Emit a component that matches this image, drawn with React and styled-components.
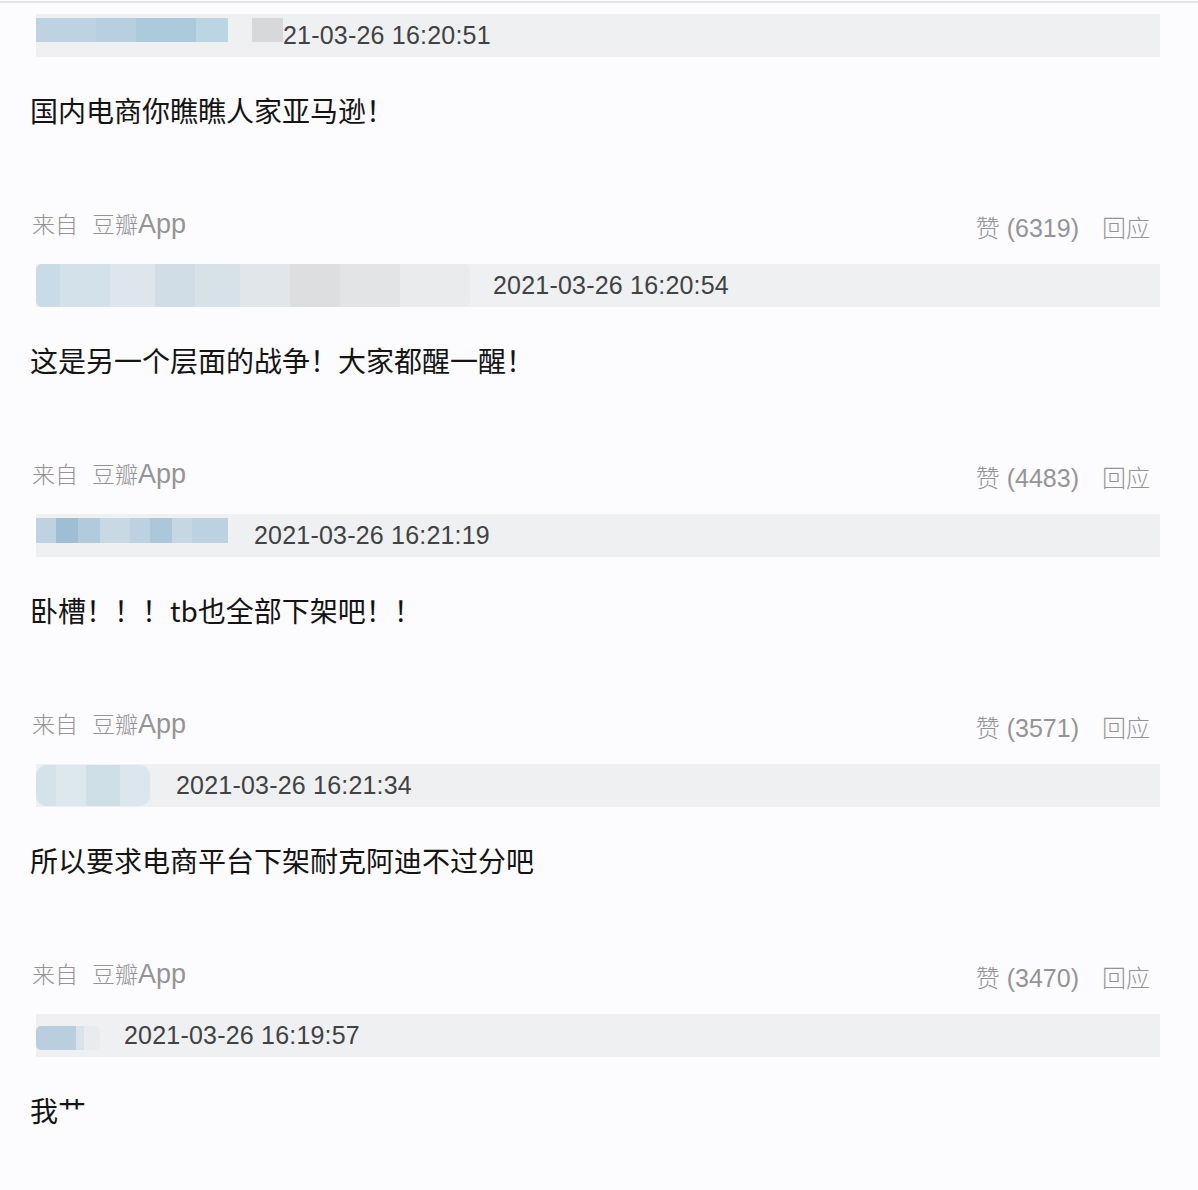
import React from "react";
import styled, { createGlobalStyle } from "styled-components";

const Global = createGlobalStyle`
  html, body { margin: 0; padding: 0; background: #fcfbfd; }
  body { font-family: "Liberation Sans", "Noto Sans CJK SC", sans-serif; }
`;

const Page = styled.div`
  width: 1198px;
  height: 1190px;
  background: #fcfbfd;
  overflow: hidden;
`;

const TopRule = styled.div`
  height: 2px;
  margin-top: 1px;
  background: #e4e4e6;
`;

const List = styled.div`
  display: flex;
  flex-direction: column;
  padding-top: 11px;
`;

const Entry = styled.div`
  display: flex;
  flex-direction: column;
  height: ${(p) => (p.$last ? "auto" : "250px")};
`;

const HeaderBar = styled.div`
  display: flex;
  align-items: center;
  height: 43px;
  margin-left: 36px;
  width: 1124px;
  background: #eff0f2;
`;

const Blur = styled.div`
  display: flex;
  align-self: ${(p) => (p.$full ? "stretch" : "flex-start")};
  margin-top: ${(p) => (p.$full ? 0 : p.$top || 4)}px;
  height: ${(p) => (p.$full ? "auto" : `${p.$h || 24}px`)};
  border-radius: ${(p) => p.$radius || 0}px;
  overflow: hidden;
  filter: blur(0.7px);
  flex-shrink: 0;
`;

const Seg = styled.div`
  height: 100%;
  flex-shrink: 0;
`;

const Time = styled.span`
  font-family: "Liberation Sans", "Noto Sans", sans-serif;
  font-size: 25px;
  color: #404244;
  margin-left: ${(p) => p.$gap}px;
  letter-spacing: 0.2px;
  white-space: nowrap;
`;

const Comment = styled.div`
  margin-top: 33px;
  padding-left: 30px;
  height: 40px;
  line-height: 40px;
  font-family: "Noto Sans CJK SC", "Liberation Sans", sans-serif;
  font-size: 28px;
  color: #141414;
  white-space: nowrap;
`;

const Meta = styled.div`
  margin-top: 78px;
  height: 30px;
  display: flex;
  justify-content: space-between;
  align-items: center;
  padding: 0 48px 0 32px;
  color: #949496;
  font-family: "Liberation Sans", "Noto Sans CJK SC", sans-serif;
`;

const Source = styled.span`
  display: flex;
  align-items: baseline;
  gap: 14px;
  font-size: 23px;
  font-family: "Noto Sans CJK SC", sans-serif;
  font-weight: 300;
  white-space: nowrap;
`;

const Latin = styled.span`
  font-family: "Liberation Sans", sans-serif;
  font-size: ${(p) => p.$size}px;
`;

const Actions = styled.span`
  display: flex;
  gap: 23px;
  padding-top: 7px;
  font-size: 25px;
  font-family: "Liberation Sans", "Noto Sans CJK SC", sans-serif;
`;

const Action = styled.span`
  white-space: nowrap;
`;

const CJK = styled.span`
  font-family: "Noto Sans CJK SC", sans-serif;
  font-weight: 300;
  font-size: 24px;
`;

const entries = [
  {
    blur: [
      { top: 4, h: 24, segs: [[60, "#bdd3e2"], [40, "#b7cfdf"], [60, "#adc9dc"], [32, "#bcd5e3"]] },
      { top: 4, h: 24, gapLeft: 24, segs: [[31, "#d6d8d9"]] },
    ],
    time: "21-03-26 16:20:51",
    gap: 0,
    text: "国内电商你瞧瞧人家亚马逊！",
  },
  {
    blur: [
      {
        full: true,
        radius: 6,
        segs: [
          [24, "#c9dbe6"], [50, "#d3e1ea"], [45, "#dde6ec"], [40, "#d0dde6"], [45, "#d6e1e8"],
          [50, "#e0e6ea"], [50, "#dcdedf"], [60, "#e3e4e5"], [70, "#eaebec"],
        ],
      },
    ],
    time: "2021-03-26 16:20:54",
    gap: 23,
    text: "这是另一个层面的战争！大家都醒一醒！",
  },
  {
    blur: [
      { top: 4, h: 25, segs: [[20, "#bed3e1"], [22, "#9fbdd3"], [22, "#b2cbdc"], [30, "#c8d9e4"], [20, "#bdd2e0"], [22, "#adc7da"], [20, "#c4d7e3"], [36, "#bcd2e1"]] },
    ],
    time: "2021-03-26 16:21:19",
    gap: 26,
    text: "卧槽！！！tb也全部下架吧！！",
  },
  {
    blur: [
      { top: 1, h: 41, radius: 10, segs: [[20, "#d4e2ea"], [30, "#dce7ee"], [34, "#cfdfe8"], [30, "#dbe6ed"]] },
    ],
    time: "2021-03-26 16:21:34",
    gap: 26,
    text: "所以要求电商平台下架耐克阿迪不过分吧",
  },
  {
    blur: [
      { top: 12, h: 24, radius: 5, segs: [[40, "#bacfdd"], [8, "#d8e3ea"], [16, "#e9ecef"]] },
    ],
    time: "2021-03-26 16:19:57",
    gap: 24,
    text: "我艹",
  },
];

const likeCounts = [6319, 4483, 3571, 3470];

export default function App() {
  return (
    <Page>
      <Global />
      <TopRule />
      <List>
        {entries.map((e, i) => (
          <Entry key={i} $last={i === entries.length - 1}>
            <HeaderBar>
              {e.blur.map((b, j) => (
                <Blur
                  key={j}
                  $full={b.full}
                  $top={b.top}
                  $h={b.h}
                  $radius={b.radius}
                  style={b.gapLeft ? { marginLeft: b.gapLeft } : undefined}
                >
                  {b.segs.map(([w, c], k) => (
                    <Seg key={k} style={{ width: w, background: c }} />
                  ))}
                </Blur>
              ))}
              <Time $gap={e.gap}>{e.time}</Time>
            </HeaderBar>
            <Comment>{e.text}</Comment>
            {i < 4 && (
              <Meta>
                <Source>
                  <span>来自</span>
                  <span>
                    豆瓣<Latin $size={27}>App</Latin>
                  </span>
                </Source>
                <Actions>
                  <Action>
                    <CJK>赞</CJK> ({likeCounts[i]})
                  </Action>
                  <Action>
                    <CJK>回应</CJK>
                  </Action>
                </Actions>
              </Meta>
            )}
          </Entry>
        ))}
      </List>
    </Page>
  );
}
